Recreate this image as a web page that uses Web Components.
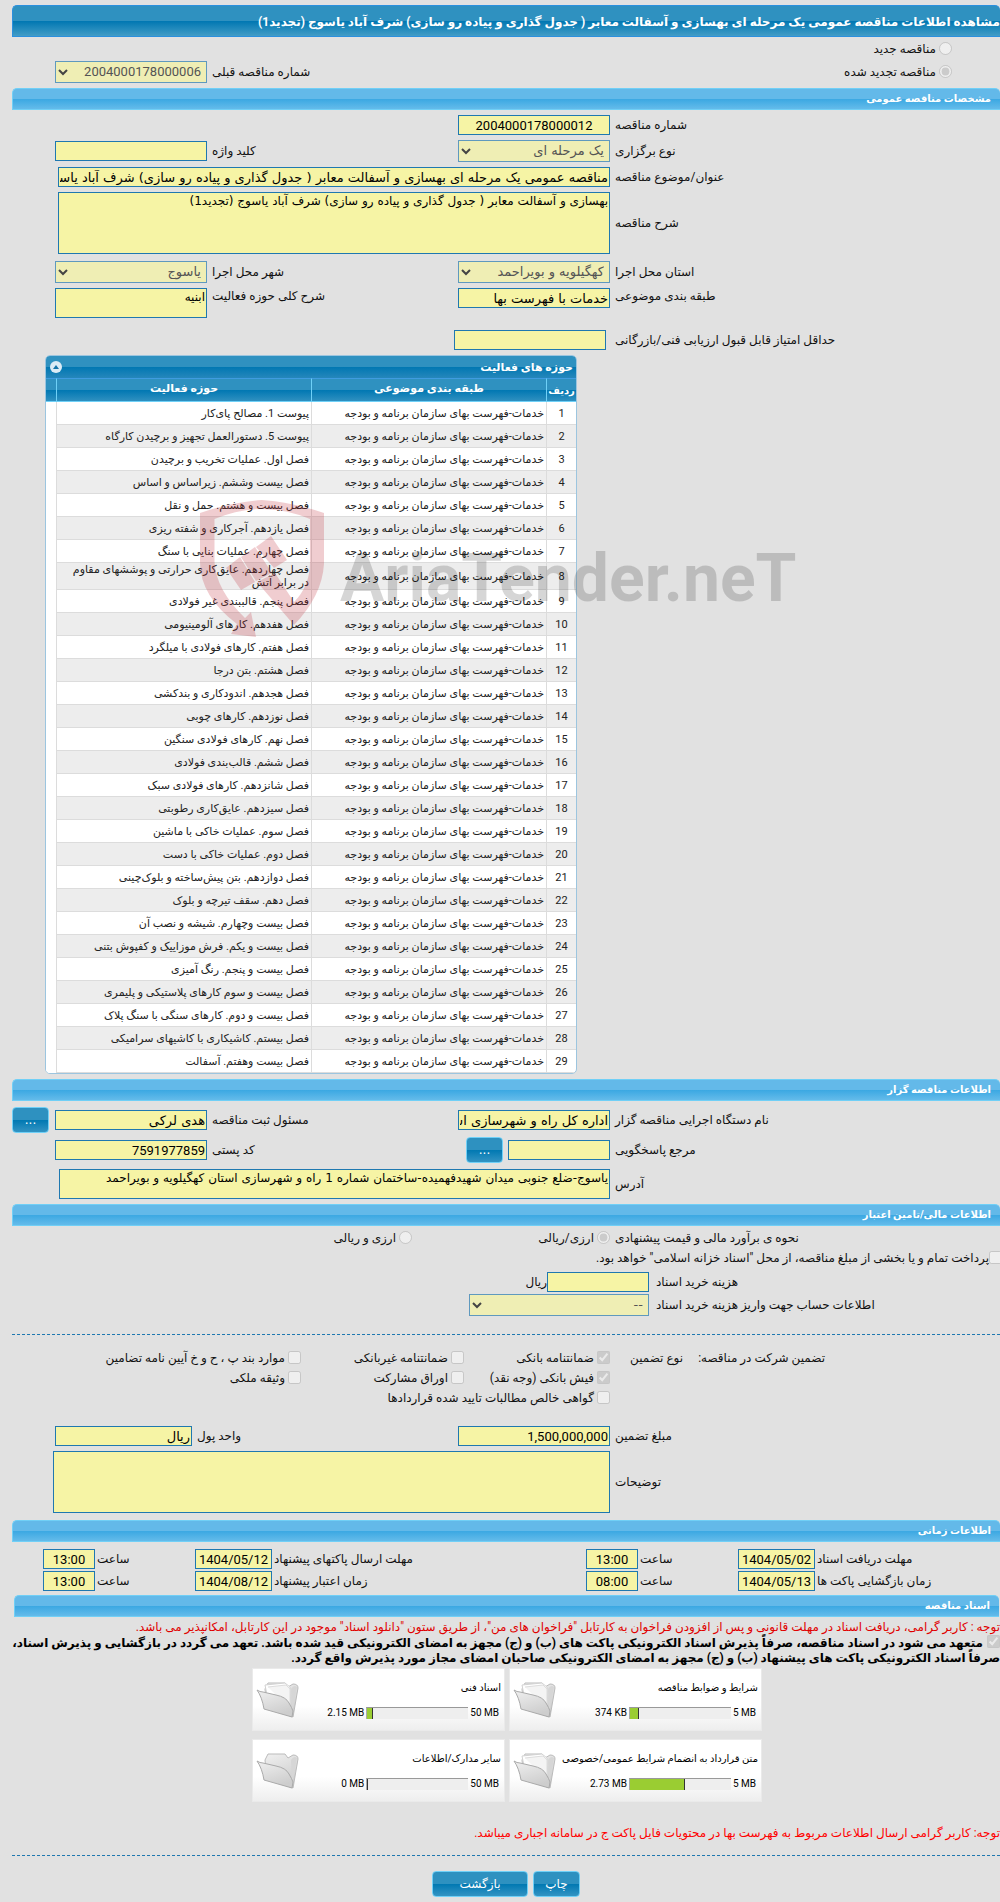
<!DOCTYPE html>
<html lang="fa" dir="rtl">

<head>
    <meta charset="UTF-8">
    <meta name="viewport" content="width=device-width, initial-scale=1.0">
    <title>مشاهده اطلاعات مناقصه عمومی</title>
    <style>
        body {
            margin: 0;
            background: #e1e1e1;
            color: #111;
            font: 12px/16px Roboto, "DejaVu Sans", sans-serif;
        }

        /* columns, right to left: label, field, label, field, rest */
        form-row {
            --cols: 390fr 152fr 251fr 152fr 43fr;
        }

        .half {
            grid-column: span 2;
        }

        .finance {
            --cols: 351fr 180fr 457fr;
            --label-gap: 7px;
        }

        .payment {
            --cols: 390fr 198fr 400fr;
        }

        .guarantee {
            --cols: 390fr 146fr 163fr 289fr;
        }

        .amount {
            --cols: 390fr 152fr 266fr 137fr 43fr;
        }

        .dates {
            --cols: 185fr 77fr 100fr 52fr 314fr 77fr 100fr 52fr 31fr;
            --label-gap: 2px;
        }

        .heads {
            display: flex;
            justify-content: flex-end;
            gap: 15px;
            padding-inline-end: 20px;
        }

        .note {
            margin: 0;
            color: #e00000;
        }

        .files {
            display: grid;
            grid-template-columns: repeat(2, 253px);
            gap: 8px 4px;
            margin-top: 2px;
            margin-inline-start: 238px;
        }

        .actions {
            display: flex;
            justify-content: center;
            gap: 5px;
        }

        hr {
            margin: 0;
            border: 0;
            border-top: 1px dashed #1f78b0;
        }
    </style>
</head>

<body>
    <tender-page>
        <title-bar>مشاهده اطلاعات مناقصه عمومی یک مرحله ای بهسازی و آسفالت معابر ( جدول گذاری و پیاده رو سازی) شرف آباد یاسوج (تجدید1)</title-bar>
        <form-stack style="--gap: 2px">
            <form-row>
                <choice-option class="half" style="--start: 48px" type="radio" label="مناقصه جدید"></choice-option>
            </form-row>
            <form-row>
                <choice-option class="half" style="--start: 48px" type="radio" checked label="مناقصه تجدید شده"></choice-option>
                <form-field type="select" label="شماره مناقصه قبلی" value="2004000178000006"></form-field>
            </form-row>
        </form-stack>

        <section-bar>مشخصات مناقصه عمومی</section-bar>
        <form-stack>
            <form-row>
                <form-field class="center" label="شماره مناقصه" value="2004000178000012"></form-field>
            </form-row>
            <form-row>
                <form-field type="select" label="نوع برگزاری" value="یک مرحله ای"></form-field>
                <form-field label="کلید واژه"></form-field>
            </form-row>
            <form-row>
                <form-field style="--span: 3; --end: 3px" label="عنوان/موضوع مناقصه" value="مناقصه عمومی یک مرحله ای بهسازی و آسفالت معابر ( جدول گذاری و پیاده رو سازی) شرف آباد یاسوج (تجدید1)"></form-field>
            </form-row>
            <form-row>
                <form-field type="textarea" style="--span: 3; --end: 3px; --area: 62px" label="شرح مناقصه" value="بهسازی و آسفالت معابر ( جدول گذاری و پیاده رو سازی) شرف آباد یاسوج (تجدید1)"></form-field>
            </form-row>
            <form-row style="margin-top: 2px">
                <form-field type="select" label="استان محل اجرا" value="کهگیلویه و بویراحمد"></form-field>
                <form-field type="select" label="شهر محل اجرا" value="یاسوج"></form-field>
            </form-row>
            <form-row style="--align: start">
                <form-field label="طبقه بندی موضوعی" value="خدمات با فهرست بها"></form-field>
                <form-field type="textarea" style="--area: 30px" label="شرح کلی حوزه فعالیت" value="ابنیه"></form-field>
            </form-row>
            <form-row style="--cols: 394fr 152fr 442fr; --label-gap: 9px; margin-top: 7px">
                <form-field label="حداقل امتیاز قابل قبول ارزیابی فنی/بازرگانی"></form-field>
            </form-row>
        </form-stack>
        <activity-table></activity-table>

        <section-bar>اطلاعات مناقصه گزار</section-bar>
        <form-stack style="--gap: 8px">
            <form-row>
                <form-field label="نام دستگاه اجرایی مناقصه گزار" value="اداره کل راه و شهرسازی استان کهگیلویه و بویراحمد"></form-field>
                <form-field label="مسئول ثبت مناقصه" value="هدی لرکی"></form-field>
                <glossy-button style="justify-self: end">...</glossy-button>
            </form-row>
            <form-row>
                <form-field style="--control: 102px" label="مرجع پاسخگویی"><glossy-button>...</glossy-button></form-field>
                <form-field label="کد پستی" value="7591977859"></form-field>
            </form-row>
            <form-row>
                <form-field type="textarea" style="--span: 3; --end: 4px; --area: 30px" label="آدرس" value="یاسوج-ضلع جنوبی میدان شهیدفهمیده-ساختمان شماره 1 راه و شهرسازی استان کهگیلویه و بویراحمد"></form-field>
            </form-row>
        </form-stack>

        <section-bar>اطلاعات مالی/تامین اعتبار</section-bar>
        <form-stack style="--gap: 0px; margin-top: 2px">
            <form-row class="payment">
                <form-label>نحوه ی برآورد مالی و قیمت پیشنهادی</form-label>
                <choice-option type="radio" checked label="ارزی/ریالی"></choice-option>
                <choice-option type="radio" label="ارزی و ریالی"></choice-option>
            </form-row>
            <choice-option style="--mark-gap: 0px; margin-right: -2px" type="checkbox" label="پرداخت تمام و یا بخشی از مبلغ مناقصه، از محل &quot;اسناد خزانه اسلامی&quot; خواهد بود."></choice-option>
            <form-row class="finance" style="margin-top: 4px">
                <form-field style="--control: 102px; --after: 0px" label="هزینه خرید اسناد">ریال</form-field>
            </form-row>
            <form-row class="finance" style="margin-top: 2px">
                <form-field type="select" label="اطلاعات حساب جهت واریز هزینه خرید اسناد" value="--"></form-field>
            </form-row>
        </form-stack>
        <hr style="margin-top: 18px">

        <form-stack style="--gap: 0px; margin-top: 13px">
            <form-row class="guarantee">
                <div class="heads"><span>تضمین شرکت در مناقصه:</span><span>نوع تضمین</span></div>
                <choice-option type="checkbox" checked label="ضمانتنامه بانکی"></choice-option>
                <choice-option type="checkbox" label="ضمانتنامه غیربانکی"></choice-option>
                <choice-option type="checkbox" label="موارد بند پ ، ح و خ آیین نامه تضامین"></choice-option>
            </form-row>
            <form-row class="guarantee">
                <span></span>
                <choice-option type="checkbox" checked label="فیش بانکی (وجه نقد)"></choice-option>
                <choice-option type="checkbox" label="اوراق مشارکت"></choice-option>
                <choice-option type="checkbox" label="وثیقه ملکی"></choice-option>
            </form-row>
            <form-row class="guarantee">
                <span></span>
                <choice-option class="half" type="checkbox" label="گواهی خالص مطالبات تایید شده قراردادها"></choice-option>
            </form-row>
        </form-stack>
        <form-stack style="margin-top: 18px">
            <form-row class="amount">
                <form-field label="مبلغ تضمین" value="1,500,000,000"></form-field>
                <form-field label="واحد پول" value="ریال"></form-field>
            </form-row>
            <form-row>
                <form-field type="textarea" style="--span: 3; --end: -2px; --area: 62px" label="توضیحات"></form-field>
            </form-row>
        </form-stack>

        <section-bar style="margin-top: 7px">اطلاعات زمانی</section-bar>
        <form-stack style="--gap: 2px; margin-top: 7px">
            <form-row class="dates">
                <form-field class="center" label="مهلت دریافت اسناد" value="1404/05/02"></form-field>
                <form-field class="center" label="ساعت" value="13:00"></form-field>
                <form-field class="center" label="مهلت ارسال پاکتهای پیشنهاد" value="1404/05/12"></form-field>
                <form-field class="center" label="ساعت" value="13:00"></form-field>
            </form-row>
            <form-row class="dates">
                <form-field class="center" label="زمان بازگشایی پاکت ها" value="1404/05/13"></form-field>
                <form-field class="center" label="ساعت" value="08:00"></form-field>
                <form-field class="center" label="زمان اعتبار پیشنهاد" value="1404/08/12"></form-field>
                <form-field class="center" label="ساعت" value="13:00"></form-field>
            </form-row>
        </form-stack>

        <section-bar style="margin: 4px 1px 0 2px">اسناد مناقصه</section-bar>
        <p class="note" style="margin-top: 2px">توجه : کاربر گرامی، دریافت اسناد در مهلت قانونی و پس از افزودن فراخوان به کارتابل "فراخوان های من"، از طریق ستون "دانلود اسناد" موجود در این کارتابل، امکانپذیر می باشد.</p>
        <agreement-note>متعهد می شود در اسناد مناقصه، صرفاً پذیرش اسناد الکترونیکی پاکت های (ب) و (ج) مجهز به امضای الکترونیکی قید شده باشد. تعهد می گردد در بازگشایی و پذیرش اسناد، صرفاً اسناد الکترونیکی پاکت های پیشنهاد (ب) و (ج) مجهز به امضای الکترونیکی صاحبان امضای مجاز مورد پذیرش واقع گردد.</agreement-note>
        <div class="files">
            <file-card size="374 KB" limit="5 MB" percent="9" full>شرایط و ضوابط مناقصه</file-card>
            <file-card size="2.15 MB" limit="50 MB" percent="6" full>اسناد فنی</file-card>
            <file-card size="2.73 MB" limit="5 MB" percent="55" full>متن قرارداد به انضمام شرایط عمومی/خصوصی</file-card>
            <file-card size="0 MB" limit="50 MB" percent="0">سایر مدارک/اطلاعات</file-card>
        </div>
        <p class="note" style="margin-top: 23px; color: #f00">توجه: کاربر گرامی ارسال اطلاعات مربوط به فهرست بها در محتویات فایل پاکت ج در سامانه اجباری میباشد.</p>
        <hr style="margin-top: 14px">
        <div class="actions" style="margin-top: 17px">
            <glossy-button style="--width: 47px">چاپ</glossy-button>
            <glossy-button style="--width: 96px">بازگشت</glossy-button>
        </div>
        <brand-mark slot="mark"></brand-mark>
    </tender-page>

    <script>
        // Base class: puts the markup of render() in an open shadow root
        class ShadowElement extends HTMLElement {
            connectedCallback() {
                this.attachShadow({ mode: 'open' }).innerHTML = this.render();
            }
            attr(name) {
                return (this.getAttribute(name) || '').replaceAll('"', '&quot;');
            }
        }

        const define = (name, render) =>
            customElements.define(name, class extends ShadowElement {
                render() { return render(this) }
            });

        define('tender-page', () => `
            <style>
                :host { display: block; position: relative; overflow: hidden; padding: 5px 0 7px 12px }
            </style>
            <slot></slot>
            <slot name="mark"></slot>`);

        define('title-bar', () => `
            <style>
                :host {
                    display: block; box-sizing: border-box; height: 32px; line-height: 32px;
                    border: 1px solid #2b90de; border-right: 0; border-radius: 5px 5px 0 0;
                    background: linear-gradient(#2f91c0 0 50%, #0077b2 50%, #429cc6);
                    color: #fff; font-weight: bold; white-space: nowrap;
                }
            </style>
            <slot></slot>`);

        define('section-bar', () => `
            <style>
                :host {
                    display: block; box-sizing: border-box; height: 22px; line-height: 20px;
                    margin-top: 5px; padding: 0 9px;
                    border: 1px solid #70cff6; border-right: 0; border-radius: 5px 5px 0 0;
                    background: linear-gradient(#63b9e9 0 48%, #39a7e2 48%, #64bbea);
                    color: #fff; font-size: 10px; font-weight: bold;
                }
            </style>
            <slot></slot>`);

        define('form-stack', () => `
            <style>
                :host { display: flex; flex-direction: column; gap: var(--gap, 5px); margin-top: var(--gap, 5px) }
            </style>
            <slot></slot>`);

        define('form-row', () => `
            <style>
                :host { display: grid; grid-template-columns: var(--cols); align-items: var(--align, center); min-height: 20px }
            </style>
            <slot></slot>`);

        define('form-label', () => `
            <style>
                :host { display: block; text-align: end; padding-inline-end: 5px }
            </style>
            <slot></slot>`);

        const arrow = `<svg viewBox="0 0 10 7" width="10" height="7"><path d="M1 1l4 4 4-4" fill="none" stroke="#444" stroke-width="2"/></svg>`;

        // Label and control become two cells of the row that holds the field
        define('form-field', el => {
            const value = el.attr('value');
            const face = /^\d/.test(value) ? 'Roboto' : '"DejaVu Sans"';
            const control = {
                select: `<select id="c" disabled><option>${value}</option></select>${arrow}`,
                textarea: `<textarea id="c" readonly>${value}</textarea>`,
            }[el.attr('type')] || `<input id="c" type="text" readonly value="${value}">`;
            return `
            <style>
                :host { display: contents }
                label { text-align: end; padding-inline-end: var(--label-gap, 5px); white-space: nowrap; min-width: 0 }
                .box {
                    display: flex; align-items: center; gap: var(--after, 5px); position: relative;
                    min-width: 0; grid-column: span var(--span, 1); margin-inline-end: var(--end, 0);
                }
                input, select, textarea {
                    box-sizing: border-box; flex: 0 0 auto; width: var(--control, 100%); height: 20px; margin: 0; padding: 0 1px;
                    border: 1px solid #1f78b0; border-radius: 0; background: #f6f4a5; color: #000;
                    font: 13px/18px ${face}, sans-serif; outline: 0;
                }
                textarea { height: var(--area); resize: none; font-size: 12px; line-height: 16px; overflow: hidden }
                select { appearance: none; height: 22px; padding: 0 5px; border-color: #5f99be; background: #efeeb4; color: #545454; opacity: 1 }
                svg { position: absolute; left: 3px; top: 8px }
                :host(.center) input { text-align: center }
            </style>
            <label for="c">${el.attr('label')}</label>
            <div class="box">${control}<slot></slot></div>`;
        });

        define('choice-option', el => `
            <style>
                :host { display: block; min-width: 0 }
                label { display: flex; align-items: center; gap: var(--mark-gap, 3px); height: 20px; padding-inline-start: var(--start, 0); white-space: nowrap }
                input { flex: none; width: 13px; height: 13px; margin: 0 0 2px }
            </style>
            <label><input type="${el.attr('type')}" disabled ${el.hasAttribute('checked') ? 'checked' : ''}>${el.attr('label')}</label>`);

        define('glossy-button', () => `
            <style>
                :host { display: block; margin-block: -2px }
                button {
                    display: block; box-sizing: border-box; width: var(--width, 37px); height: 26px; padding: 0;
                    border: 1px solid #6fd0f7; border-radius: 4px;
                    background: linear-gradient(#2e91c0 0 50%, #0078b2 50%, #3394c3);
                    color: #fff; font: 12px/22px "DejaVu Sans", sans-serif;
                }
            </style>
            <button type="button"><slot></slot></button>`);

        define('agreement-note', () => `
            <style>
                :host { display: block }
                label { display: block; color: #000; font-weight: bold; line-height: 15px }
                input { width: 13px; height: 13px; margin: 0 0 0 4px; vertical-align: -1px }
            </style>
            <label><input type="checkbox" checked disabled><slot></slot></label>`);

        const activities = [
            'پیوست 1. مصالح پای‌کار',
            'پیوست 5. دستورالعمل تجهیز و برچیدن کارگاه',
            'فصل اول. عملیات تخریب و برچیدن',
            'فصل بیست وششم. زیراساس و اساس',
            'فصل بیست و هشتم. حمل و نقل',
            'فصل یازدهم. آجرکاری و شفته ریزی',
            'فصل چهارم. عملیات بنایی با سنگ',
            'فصل چهاردهم. عایق‌کاری حرارتی و پوششهای مقاوم در برابر آتش',
            'فصل پنجم. قالببندی غیر فولادی',
            'فصل هفدهم. کارهای آلومینیومی',
            'فصل هفتم. کارهای فولادی با میلگرد',
            'فصل هشتم. بتن درجا',
            'فصل هجدهم. اندودکاری و بندکشی',
            'فصل نوزدهم. کارهای چوبی',
            'فصل نهم. کارهای فولادی سنگین',
            'فصل ششم. قالب‌بندی فولادی',
            'فصل شانزدهم. کارهای فولادی سبک',
            'فصل سیزدهم. عایق‌کاری رطوبتی',
            'فصل سوم. عملیات خاکی با ماشین',
            'فصل دوم. عملیات خاکی با دست',
            'فصل دوازدهم. بتن پیش‌ساخته و بلوک‌چینی',
            'فصل دهم. سقف تیرچه و بلوک',
            'فصل بیست وچهارم. شیشه و نصب آن',
            'فصل بیست و یکم. فرش موزاییک و کفپوش بتنی',
            'فصل بیست و پنجم. رنگ آمیزی',
            'فصل بیست و سوم کارهای پلاستیکی و پلیمری',
            'فصل بیست و دوم. کارهای سنگی با سنگ پلاک',
            'فصل بیستم. کاشیکاری با کاشیهای سرامیکی',
            'فصل بیست وهفتم. آسفالت',
        ];

        define('activity-table', () => `
            <style>
                :host {
                    display: block; box-sizing: border-box; width: 532px; margin: 5px 423px 0 0;
                    border: 1px solid #9cc5df; border-radius: 5px; overflow: hidden; background: #fff;
                    color: #222; font-size: 11px; line-height: 13px;
                }
                header {
                    display: flex; align-items: center; justify-content: space-between; height: 22px; padding: 0 3px 0 4px;
                    background: linear-gradient(#2f91c0 0 50%, #0077b2 50%, #2687bb); color: #fff; font-weight: bold;
                }
                header button { width: 12px; height: 12px; padding: 0; border: 0; border-radius: 50%; background: #dcebf5; display: grid; place-items: center }
                table { width: 100%; table-layout: fixed; border-collapse: separate; border-spacing: 0 }
                th {
                    box-sizing: border-box; height: 24px; padding: 0 0 3px; color: #fff;
                    border-left: 1px solid #6fd0f7; border-bottom: 1px solid #6fd0f7; border-top: 1px solid #3f9ce0;
                    background: linear-gradient(#2f91c0 0 50%, #0077b2 50%, #2f90c0);
                }
                th:first-child { padding: 0; font-size: 10px }
                th:last-child { border-left: 0 }
                td { box-sizing: border-box; height: 23px; padding: 0 2px 0 8px; border-left: 1px solid #dcdcdc; border-bottom: 1px solid #dcdcdc }
                td:first-child { text-align: center; padding: 0 }
                tr:nth-child(even) td { background: #ededed }
                tr td:last-child { padding: 0; background: #fff; border: 0 }
            </style>
            <header>حوزه های فعالیت
                <button type="button" aria-label="جمع کردن"><svg viewBox="0 0 6 4" width="6" height="4"><path d="M0 4l3-4 3 4z" fill="#1573a8"/></svg></button>
            </header>
            <table>
                <colgroup><col style="width: 30px"><col style="width: 235px"><col><col style="width: 10px"></colgroup>
                <thead><tr><th>ردیف</th><th>طبقه بندی موضوعی</th><th>حوزه فعالیت</th><th></th></tr></thead>
                <tbody>${activities.map((name, i) => `
                    <tr><td>${i + 1}</td><td>خدمات-فهرست بهای سازمان برنامه و بودجه</td><td>${name}</td><td></td></tr>`).join('')}
                </tbody>
            </table>`);

        const paper = `
            <path d="M9 4l20-2 5 4 1 24-22-6z" fill="#fff" stroke="#d2d2d2"/>
            <path d="M12 6l18-2 4 4v20" fill="#f4f4f4" stroke="#ddd"/>`;

        define('file-card', el => `
            <style>
                :host {
                    display: grid; grid-template-columns: minmax(0, 1fr) 44px; box-sizing: border-box; height: 63px; padding: 12px 3px 0 3px;
                    background: linear-gradient(#fff 60%, #eee); border: 1px solid #eaeaea;
                    color: #000; font-size: 10px; line-height: 14px; white-space: nowrap;
                }
                .usage { display: flex; align-items: center; gap: 2px; margin-top: 11px; direction: ltr; justify-content: flex-end }
                .usage span:last-child { margin-right: 2px }
                .bar { width: 102px; height: 12px; box-sizing: border-box; background: #eee; border-top: 1px solid #999; border-left: 1px solid #aaa }
                .bar i { display: block; height: 11px; width: var(--percent); background: #9acd32; border-right: 1px solid #333; box-sizing: border-box; min-width: 1px }
                svg { display: block; justify-self: end }
            </style>
            <div>
                <slot></slot>
                <div class="usage">
                    <span>${el.attr('size')}</span>
                    <div class="bar"><i style="--percent: ${el.attr('percent')}%"></i></div>
                    <span>${el.attr('limit')}</span>
                </div>
            </div>
            <svg viewBox="0 0 43 38" width="43" height="38">
                <defs>
                    <linearGradient id="g" x2="0.4" y2="1"><stop stop-color="#f0f0f0"/><stop offset="1" stop-color="#cdcdcd"/></linearGradient>
                </defs>
                <path d="M9 8l3-6 17 0 3 4 5-3q5 0 5 4l-5 29-26-9z" fill="url(#g)" stroke="#bbb"/>
                ${el.hasAttribute('full') ? paper : ''}
                <path d="M35 8q3-5 6-2l-5 26z" fill="#d6d6d6"/>
                <path d="M1 9q3 2 6 2l13 3q10 2 13 8 3 5 4 8l-1 6-28-8q-2-12-7-19z" fill="url(#g)" stroke="#aaa"/>
            </svg>`);

        define('brand-mark', () => `
            <style>
                :host { position: absolute; left: 200px; top: 500px; display: flex; direction: ltr; pointer-events: none }
                span { margin: 41px 0 0 16px; color: rgb(0 0 0 / .16); font: bold 66px/76px Roboto, sans-serif }
            </style>
            <svg viewBox="0 0 124 138" width="124" height="138" fill="#c2303a" fill-opacity=".24">
                <path d="M62 0Q92 2 124 13V64Q122 96 94 125L57 82 75 73 94 102Q110 86 110 62V19Q62-1 14.500 19V62Q16 90 45 118L51 112 56 137 31 134 37 124Q0 96 0 62V13Q32 2 62 0z"/>
                <path d="M26 68L40 57 55 82 41 90zM41 57L55 47 72 73 56 81zM56 47L71 36 87 60 74 68z"/>
            </svg>
            <span>AriaTender.neT</span>`);
    </script>
</body>

</html>
